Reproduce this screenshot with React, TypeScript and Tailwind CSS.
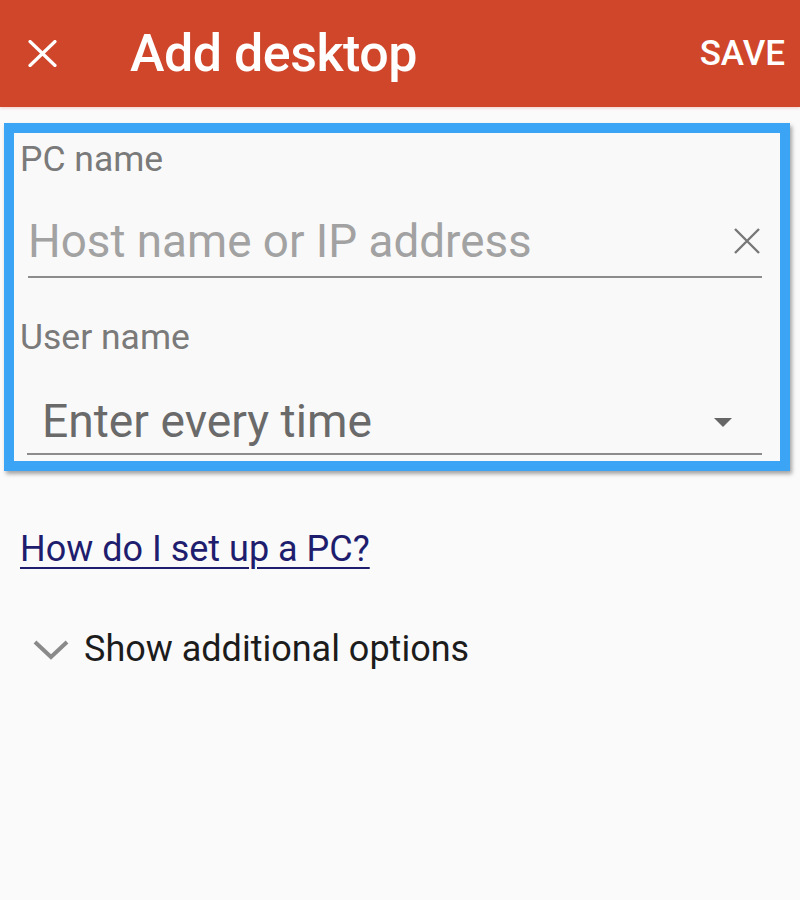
import React from 'react';

export default function App() {
  return (
    <div className="w-[800px] h-[900px] bg-[#fafafa] font-['Roboto',sans-serif] overflow-hidden">
      {/* App bar */}
      <div className="h-[107px] bg-[#d0462a] flex items-center shadow-[0_1px_3px_rgba(208,70,42,0.25)]">
        <div className="w-[130px] flex items-center pl-[28px]">
          <svg width="29" height="27" viewBox="0 0 29 27">
            <path d="M2 1.5 L27 25.5 M27 1.5 L2 25.5" stroke="#fff" strokeWidth="3.2" strokeLinecap="round" />
          </svg>
        </div>
        <div className="flex-1 text-white text-[52px] leading-[60px] font-medium tracking-[-0.5px]">Add desktop</div>
        <div className="pr-[15px] text-white text-[35px] leading-[40px] font-medium">SAVE</div>
      </div>

      {/* Focused form block */}
      <div className="mt-[16px] mx-[4px] w-[786px] border-[10px] border-[#3ca4f4] bg-[#f9f9f9] shadow-[2px_3px_4px_rgba(0,0,0,0.35)] pt-[6px] pb-[6px]">
        <div className="pl-[6px] text-[35.5px] leading-[40px] text-[#7a7a7a]">PC name</div>
        <div className="mt-[36px] ml-[14px] mr-[18px] flex items-center justify-between pb-[7px] border-b-2 border-[#8c8c8c]">
          <span className="text-[45.8px] leading-[54px] text-[#a2a2a2]">Host name or IP address</span>
          <svg width="28" height="28" viewBox="0 0 28 28" className="mr-[1px] -mt-[3px]">
            <path d="M2 2 L26 26 M26 2 L2 26" stroke="#777" strokeWidth="2.4" />
          </svg>
        </div>

        <div className="mt-[39px] pl-[6px] text-[35.5px] leading-[40px] text-[#7a7a7a]">User name</div>
        <div className="mt-[37px] ml-[13px] mr-[18px] flex items-center justify-between pb-[5px] border-b-2 border-[#8c8c8c]">
          <span className="pl-[15px] text-[46.2px] leading-[54px] text-[#6a6a6a]">Enter every time</span>
          <svg width="18" height="9" viewBox="0 0 18 9" className="mr-[30px] mt-[2px]">
            <polygon points="0,0 18,0 9,9" fill="#666" />
          </svg>
        </div>
      </div>

      {/* Help link */}
      <div className="mt-[57px] pl-[20px]">
        <a className="text-[36px] leading-[42px] text-[#1e1d6e] underline decoration-2 underline-offset-[6px]">How do I set up a PC?</a>
      </div>

      {/* Additional options */}
      <div className="mt-[58px] pl-[33px] flex items-center gap-[15px]">
        <svg width="36" height="20" viewBox="0 0 36 20" className="mt-[2px]">
          <polyline points="2,2 18,17 34,2" fill="none" stroke="#8a8a8a" strokeWidth="4" />
        </svg>
        <span className="text-[36px] leading-[42px] text-[#1c1c1c]">Show additional options</span>
      </div>
    </div>
  );
}
